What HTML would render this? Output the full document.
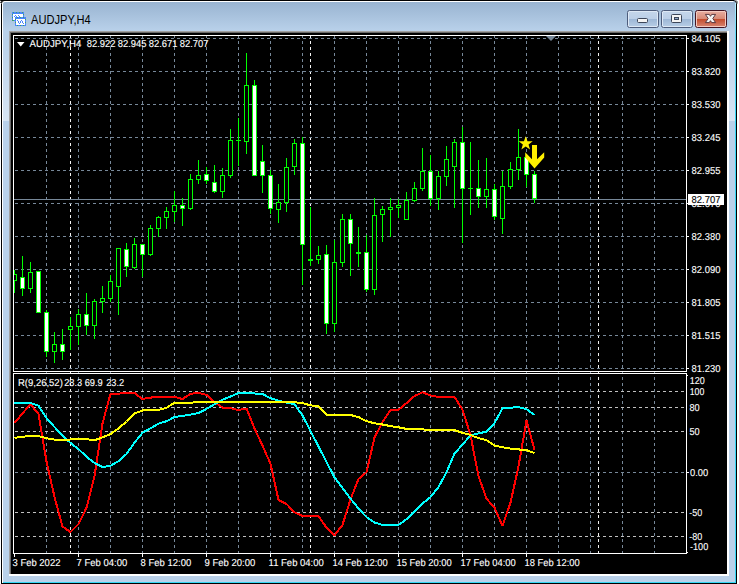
<!DOCTYPE html>
<html lang="en"><head><meta charset="utf-8"><title>AUDJPY,H4</title>
<style>
html,body{margin:0;padding:0;background:#fff;}
body{width:739px;height:584px;overflow:hidden;position:relative;}
svg{position:absolute;left:0;top:0;display:block;}
text{font-family:"Liberation Sans",sans-serif;}
.ax{font-size:10px;text-rendering:geometricPrecision;fill:#fff;stroke:#fff;stroke-width:0.12px;}
.ttl{font-size:12.5px;fill:#000;}
</style></head><body>
<svg width="739" height="584" viewBox="0 0 739 584">
<defs>
<linearGradient id="cap" x1="0" y1="0" x2="0" y2="1"><stop offset="0" stop-color="#99b4d1"/><stop offset="1" stop-color="#b9d1ea"/></linearGradient>
<linearGradient id="btnT" x1="0" y1="0" x2="0" y2="1"><stop offset="0" stop-color="#c3d5ea"/><stop offset="1" stop-color="#bbcfe7"/></linearGradient>
<linearGradient id="btnB" x1="0" y1="0" x2="0" y2="1"><stop offset="0" stop-color="#9db7d6"/><stop offset="1" stop-color="#b4cbe4"/></linearGradient>
<linearGradient id="clsT" x1="0" y1="0" x2="0" y2="1"><stop offset="0" stop-color="#e5a99b"/><stop offset="1" stop-color="#d78874"/></linearGradient>
<linearGradient id="clsB" x1="0" y1="0" x2="0" y2="1"><stop offset="0" stop-color="#c24a2b"/><stop offset="1" stop-color="#d57f6a"/></linearGradient>
<linearGradient id="cy" gradientUnits="userSpaceOnUse" x1="0" y1="3" x2="0" y2="120"><stop offset="0" stop-color="#b4ecff"/><stop offset="0.25" stop-color="#62ddf9"/><stop offset="1" stop-color="#35d7f5"/></linearGradient>
<linearGradient id="glow" gradientUnits="userSpaceOnUse" x1="0" y1="40" x2="0" y2="121"><stop offset="0" stop-color="#fff" stop-opacity="0"/><stop offset="1" stop-color="#fff" stop-opacity="0.42"/></linearGradient>
</defs>
<g shape-rendering="crispEdges">
<rect x="0" y="0" width="739" height="584" fill="#ffffff"/>
<path d="M1.5 584 V3.5 Q1.5 0.5 4.5 0.5 H733.5 Q736.5 0.5 736.5 3.5 V584" fill="#b9d1ea" stroke="#000" stroke-width="1" shape-rendering="geometricPrecision"/>
<rect x="1" y="583" width="736" height="1" fill="#000"/>
<rect x="0" y="0" width="734" height="1" fill="#000"/>
<rect x="1" y="1" width="1" height="1" fill="#3a3a3a"/>
<rect x="2" y="1" width="1" height="1" fill="#444"/>
<rect x="3" y="1" width="1" height="1" fill="#777"/>
<rect x="0" y="2" width="1" height="1" fill="#555"/>
<rect x="1" y="2" width="1" height="1" fill="#222"/>
<rect x="2" y="2" width="1" height="1" fill="#777"/>
<rect x="0" y="1" width="1" height="1" fill="#ddd"/>
<rect x="1" y="3" width="1" height="1" fill="#666"/>
<rect x="0" y="0" width="1" height="1" fill="#333"/>
<rect x="735" y="0" width="1" height="1" fill="#999"/>
<rect x="736" y="0" width="1" height="1" fill="#bbb"/>
<rect x="737" y="1" width="1" height="1" fill="#aaa"/>
<rect x="737" y="2" width="1" height="1" fill="#999"/>
<rect x="737" y="3" width="1" height="1" fill="#bbb"/>
<rect x="736" y="1" width="1" height="1" fill="#777"/>
<rect x="3" y="2" width="732" height="29" fill="url(#cap)"/>
<path d="M2.5 582 V4 Q2.5 1.5 5 1.5 H733" fill="none" stroke="#fff" stroke-width="1" shape-rendering="geometricPrecision"/>
<rect x="3" y="40" width="6" height="81" fill="url(#glow)"/>
<rect x="729" y="40" width="6" height="81" fill="url(#glow)"/>
<rect x="735" y="3" width="1" height="580" fill="url(#cy)"/>
<rect x="3" y="582" width="733" height="1" fill="#35d7f5"/>
<rect x="2" y="582" width="1" height="1" fill="#fff"/>
<rect x="9" y="31" width="720" height="545" fill="#a0a0a0"/>
<rect x="10" y="32" width="719" height="544" fill="#696969"/>
<rect x="11" y="33" width="718" height="543" fill="#ffffff"/>
<rect x="9" y="574" width="2" height="2" fill="#ffffff"/>
<rect x="727" y="31" width="2" height="2" fill="#ffffff"/>
<path d="M9 576 L11 574 L11 576 Z" fill="#fff"/>
<rect x="11" y="33" width="716" height="541" fill="#000000"/>
</g>
<g shape-rendering="crispEdges">
<rect x="12" y="12" width="12" height="9" fill="#4a86ff"/>
<rect x="13" y="14" width="10" height="6" fill="#ffffff"/>
<rect x="15" y="17" width="11" height="9" fill="#4a86ff"/>
<rect x="16" y="19" width="9" height="6" fill="#ffffff"/>
<rect x="14" y="16" width="1" height="1" fill="#4a86ff"/>
<rect x="15" y="15" width="1" height="1" fill="#4a86ff"/>
<rect x="16" y="16" width="1" height="1" fill="#4a86ff"/>
<rect x="18" y="15" width="1" height="1" fill="#4a86ff"/>
<rect x="19" y="16" width="1" height="1" fill="#4a86ff"/>
<rect x="20" y="17" width="1" height="1" fill="#4a86ff"/>
<rect x="17" y="20" width="1" height="1" fill="#4a86ff"/>
<rect x="18" y="21" width="1" height="1" fill="#4a86ff"/>
<rect x="18" y="22" width="1" height="1" fill="#4a86ff"/>
<rect x="19" y="23" width="1" height="1" fill="#4a86ff"/>
<rect x="20" y="22" width="1" height="1" fill="#4a86ff"/>
<rect x="20" y="21" width="1" height="1" fill="#4a86ff"/>
<rect x="21" y="20" width="1" height="1" fill="#4a86ff"/>
<rect x="22" y="21" width="1" height="1" fill="#4a86ff"/>
<rect x="22" y="22" width="1" height="1" fill="#4a86ff"/>
<rect x="23" y="23" width="1" height="1" fill="#4a86ff"/>
<rect x="13" y="12" width="1" height="1" fill="#3c9f6c"/>
<rect x="16" y="12" width="1" height="1" fill="#3c9f6c"/>
<rect x="19" y="12" width="1" height="1" fill="#3c9f6c"/>
<rect x="22" y="12" width="1" height="1" fill="#3c9f6c"/>
<rect x="12" y="14" width="1" height="1" fill="#3c9f6c"/>
<rect x="12" y="17" width="1" height="1" fill="#3c9f6c"/>
<rect x="12" y="20" width="1" height="1" fill="#3c9f6c"/>
<rect x="23" y="14" width="1" height="1" fill="#3c9f6c"/>
<rect x="13" y="20" width="1" height="1" fill="#3c9f6c"/>
<rect x="17" y="17" width="1" height="1" fill="#3c9f6c"/>
<rect x="17" y="25" width="1" height="1" fill="#3c9f6c"/>
<rect x="20" y="17" width="1" height="1" fill="#3c9f6c"/>
<rect x="20" y="25" width="1" height="1" fill="#3c9f6c"/>
<rect x="23" y="17" width="1" height="1" fill="#3c9f6c"/>
<rect x="23" y="25" width="1" height="1" fill="#3c9f6c"/>
<rect x="15" y="19" width="1" height="1" fill="#3c9f6c"/>
<rect x="25" y="19" width="1" height="1" fill="#3c9f6c"/>
<rect x="15" y="22" width="1" height="1" fill="#3c9f6c"/>
<rect x="25" y="22" width="1" height="1" fill="#3c9f6c"/>
</g>
<text class="ttl" transform="translate(31.1 23.6) scale(0.888 1)">AUDJPY,H4</text>
<rect x="627.5" y="10.5" width="31" height="17" rx="2" ry="2" fill="#dde8f5" stroke="#4d5d7c" stroke-width="1"/>
<rect x="629" y="12" width="28" height="7" fill="url(#btnT)" shape-rendering="crispEdges"/>
<rect x="629" y="19" width="28" height="7" fill="url(#btnB)" shape-rendering="crispEdges"/>
<rect x="661.5" y="10.5" width="31" height="17" rx="2" ry="2" fill="#dde8f5" stroke="#4d5d7c" stroke-width="1"/>
<rect x="663" y="12" width="28" height="7" fill="url(#btnT)" shape-rendering="crispEdges"/>
<rect x="663" y="19" width="28" height="7" fill="url(#btnB)" shape-rendering="crispEdges"/>
<rect x="695.5" y="10.5" width="31" height="17" rx="2" ry="2" fill="#f3c9bf" stroke="#431422" stroke-width="1"/>
<rect x="697" y="12" width="28" height="7" fill="url(#clsT)" shape-rendering="crispEdges"/>
<rect x="697" y="19" width="28" height="7" fill="url(#clsB)" shape-rendering="crispEdges"/>
<rect x="637.5" y="18.5" width="10" height="4" rx="1" fill="#f4f4f4" stroke="#3c4659" stroke-width="1"/>
<rect x="671.5" y="14.5" width="10" height="8" rx="1" fill="#f4f4f4" stroke="#3c4659" stroke-width="1"/>
<rect x="674.5" y="17.5" width="4" height="2" fill="#8ea6c6" stroke="#3c4659" stroke-width="1"/>
<path d="M705.4 14.4 H709.3 L710.5 16.3 L711.7 14.4 H715.6 L712.8 18.5 L715.6 22.6 H711.7 L710.5 20.7 L709.3 22.6 H705.4 L708.2 18.5 Z" fill="#f4f4f4" stroke="#5a3a40" stroke-width="1" stroke-linejoin="round"/>
<g shape-rendering="crispEdges">
<line x1="46.5" y1="36" x2="46.5" y2="553" stroke="#778899" stroke-width="1" stroke-dasharray="3 3" stroke-dashoffset="1"/>
<line x1="78.5" y1="36" x2="78.5" y2="553" stroke="#778899" stroke-width="1" stroke-dasharray="3 3" stroke-dashoffset="1"/>
<line x1="110.5" y1="36" x2="110.5" y2="553" stroke="#778899" stroke-width="1" stroke-dasharray="3 3" stroke-dashoffset="1"/>
<line x1="142.5" y1="36" x2="142.5" y2="553" stroke="#778899" stroke-width="1" stroke-dasharray="3 3" stroke-dashoffset="1"/>
<line x1="174.5" y1="36" x2="174.5" y2="553" stroke="#778899" stroke-width="1" stroke-dasharray="3 3" stroke-dashoffset="1"/>
<line x1="206.5" y1="36" x2="206.5" y2="553" stroke="#778899" stroke-width="1" stroke-dasharray="3 3" stroke-dashoffset="1"/>
<line x1="238.5" y1="36" x2="238.5" y2="553" stroke="#778899" stroke-width="1" stroke-dasharray="3 3" stroke-dashoffset="1"/>
<line x1="270.5" y1="36" x2="270.5" y2="553" stroke="#778899" stroke-width="1" stroke-dasharray="3 3" stroke-dashoffset="1"/>
<line x1="302.5" y1="36" x2="302.5" y2="553" stroke="#778899" stroke-width="1" stroke-dasharray="3 3" stroke-dashoffset="1"/>
<line x1="334.5" y1="36" x2="334.5" y2="553" stroke="#778899" stroke-width="1" stroke-dasharray="3 3" stroke-dashoffset="1"/>
<line x1="366.5" y1="36" x2="366.5" y2="553" stroke="#778899" stroke-width="1" stroke-dasharray="3 3" stroke-dashoffset="1"/>
<line x1="398.5" y1="36" x2="398.5" y2="553" stroke="#778899" stroke-width="1" stroke-dasharray="3 3" stroke-dashoffset="1"/>
<line x1="430.5" y1="36" x2="430.5" y2="553" stroke="#778899" stroke-width="1" stroke-dasharray="3 3" stroke-dashoffset="1"/>
<line x1="462.5" y1="36" x2="462.5" y2="553" stroke="#778899" stroke-width="1" stroke-dasharray="3 3" stroke-dashoffset="1"/>
<line x1="494.5" y1="36" x2="494.5" y2="553" stroke="#778899" stroke-width="1" stroke-dasharray="3 3" stroke-dashoffset="1"/>
<line x1="526.5" y1="36" x2="526.5" y2="553" stroke="#778899" stroke-width="1" stroke-dasharray="3 3" stroke-dashoffset="1"/>
<line x1="558.5" y1="36" x2="558.5" y2="553" stroke="#778899" stroke-width="1" stroke-dasharray="3 3" stroke-dashoffset="1"/>
<line x1="590.5" y1="36" x2="590.5" y2="553" stroke="#778899" stroke-width="1" stroke-dasharray="3 3" stroke-dashoffset="1"/>
<line x1="622.5" y1="36" x2="622.5" y2="553" stroke="#778899" stroke-width="1" stroke-dasharray="3 3" stroke-dashoffset="1"/>
<line x1="654.5" y1="36" x2="654.5" y2="553" stroke="#778899" stroke-width="1" stroke-dasharray="3 3" stroke-dashoffset="1"/>
<line x1="70.5" y1="36" x2="70.5" y2="553" stroke="#f4f4f4" stroke-width="1" stroke-dasharray="3 3" stroke-dashoffset="1"/>
<line x1="310.5" y1="36" x2="310.5" y2="553" stroke="#f4f4f4" stroke-width="1" stroke-dasharray="3 3" stroke-dashoffset="1"/>
<line x1="598.5" y1="36" x2="598.5" y2="553" stroke="#f4f4f4" stroke-width="1" stroke-dasharray="3 3" stroke-dashoffset="1"/>
<line x1="14" y1="38.5" x2="686" y2="38.5" stroke="#778899" stroke-width="1" stroke-dasharray="3 3" stroke-dashoffset="5"/>
<line x1="14" y1="71.5" x2="686" y2="71.5" stroke="#778899" stroke-width="1" stroke-dasharray="3 3" stroke-dashoffset="5"/>
<line x1="14" y1="104.5" x2="686" y2="104.5" stroke="#778899" stroke-width="1" stroke-dasharray="3 3" stroke-dashoffset="5"/>
<line x1="14" y1="137.5" x2="686" y2="137.5" stroke="#778899" stroke-width="1" stroke-dasharray="3 3" stroke-dashoffset="5"/>
<line x1="14" y1="170.5" x2="686" y2="170.5" stroke="#778899" stroke-width="1" stroke-dasharray="3 3" stroke-dashoffset="5"/>
<line x1="14" y1="203.5" x2="686" y2="203.5" stroke="#778899" stroke-width="1" stroke-dasharray="3 3" stroke-dashoffset="5"/>
<line x1="14" y1="236.5" x2="686" y2="236.5" stroke="#778899" stroke-width="1" stroke-dasharray="3 3" stroke-dashoffset="5"/>
<line x1="14" y1="269.5" x2="686" y2="269.5" stroke="#778899" stroke-width="1" stroke-dasharray="3 3" stroke-dashoffset="5"/>
<line x1="14" y1="302.5" x2="686" y2="302.5" stroke="#778899" stroke-width="1" stroke-dasharray="3 3" stroke-dashoffset="5"/>
<line x1="14" y1="335.5" x2="686" y2="335.5" stroke="#778899" stroke-width="1" stroke-dasharray="3 3" stroke-dashoffset="5"/>
<line x1="14" y1="368.5" x2="686" y2="368.5" stroke="#778899" stroke-width="1" stroke-dasharray="3 3" stroke-dashoffset="5"/>
<line x1="14" y1="391.5" x2="686" y2="391.5" stroke="#c0c0c0" stroke-width="1" stroke-dasharray="3 3" stroke-dashoffset="5"/>
<line x1="14" y1="407.5" x2="686" y2="407.5" stroke="#c0c0c0" stroke-width="1" stroke-dasharray="3 3" stroke-dashoffset="5"/>
<line x1="14" y1="431.5" x2="686" y2="431.5" stroke="#c0c0c0" stroke-width="1" stroke-dasharray="3 3" stroke-dashoffset="5"/>
<line x1="14" y1="512.5" x2="686" y2="512.5" stroke="#c0c0c0" stroke-width="1" stroke-dasharray="3 3" stroke-dashoffset="5"/>
<line x1="14" y1="536.5" x2="686" y2="536.5" stroke="#c0c0c0" stroke-width="1" stroke-dasharray="3 3" stroke-dashoffset="5"/>
<line x1="14" y1="472.5" x2="686" y2="472.5" stroke="#778899" stroke-width="1" stroke-dasharray="3 3" stroke-dashoffset="5"/>
<rect x="14" y="199" width="672" height="1" fill="#778899"/>
<path d="M546 36 H556 L551 41 Z" fill="#778899" shape-rendering="geometricPrecision"/>
<rect x="14" y="270" width="1" height="23" fill="#00ff00"/>
<rect x="12" y="274" width="5" height="7" fill="#00ff00"/>
<rect x="13" y="275" width="3" height="5" fill="#000000"/>
<rect x="22" y="256" width="1" height="40" fill="#00ff00"/>
<rect x="20" y="277" width="5" height="12" fill="#00ff00"/>
<rect x="21" y="278" width="3" height="10" fill="#ffffff"/>
<rect x="30" y="262" width="1" height="31" fill="#00ff00"/>
<rect x="28" y="272" width="5" height="17" fill="#00ff00"/>
<rect x="29" y="273" width="3" height="15" fill="#000000"/>
<rect x="38" y="271" width="1" height="42" fill="#00ff00"/>
<rect x="36" y="271" width="5" height="42" fill="#00ff00"/>
<rect x="37" y="272" width="3" height="40" fill="#ffffff"/>
<rect x="46" y="310" width="1" height="47" fill="#00ff00"/>
<rect x="44" y="312" width="5" height="40" fill="#00ff00"/>
<rect x="45" y="313" width="3" height="38" fill="#ffffff"/>
<rect x="54" y="332" width="1" height="31" fill="#00ff00"/>
<rect x="52" y="344" width="5" height="8" fill="#00ff00"/>
<rect x="53" y="345" width="3" height="6" fill="#000000"/>
<rect x="62" y="329" width="1" height="31" fill="#00ff00"/>
<rect x="60" y="344" width="5" height="8" fill="#00ff00"/>
<rect x="61" y="345" width="3" height="6" fill="#ffffff"/>
<rect x="70" y="317" width="1" height="33" fill="#00ff00"/>
<rect x="68" y="326" width="5" height="4" fill="#00ff00"/>
<rect x="69" y="327" width="3" height="2" fill="#000000"/>
<rect x="78" y="309" width="1" height="36" fill="#00ff00"/>
<rect x="76" y="314" width="5" height="13" fill="#00ff00"/>
<rect x="77" y="315" width="3" height="11" fill="#000000"/>
<rect x="86" y="293" width="1" height="42" fill="#00ff00"/>
<rect x="84" y="314" width="5" height="12" fill="#00ff00"/>
<rect x="85" y="315" width="3" height="10" fill="#ffffff"/>
<rect x="94" y="299" width="1" height="40" fill="#00ff00"/>
<rect x="92" y="301" width="5" height="25" fill="#00ff00"/>
<rect x="93" y="302" width="3" height="23" fill="#000000"/>
<rect x="102" y="286" width="1" height="27" fill="#00ff00"/>
<rect x="100" y="298" width="5" height="4" fill="#00ff00"/>
<rect x="101" y="299" width="3" height="2" fill="#000000"/>
<rect x="110" y="275" width="1" height="27" fill="#00ff00"/>
<rect x="108" y="281" width="5" height="18" fill="#00ff00"/>
<rect x="109" y="282" width="3" height="16" fill="#000000"/>
<rect x="118" y="248" width="1" height="67" fill="#00ff00"/>
<rect x="116" y="248" width="5" height="39" fill="#00ff00"/>
<rect x="117" y="249" width="3" height="37" fill="#000000"/>
<rect x="126" y="243" width="1" height="34" fill="#00ff00"/>
<rect x="124" y="249" width="5" height="18" fill="#00ff00"/>
<rect x="125" y="250" width="3" height="16" fill="#ffffff"/>
<rect x="134" y="238" width="1" height="31" fill="#00ff00"/>
<rect x="132" y="244" width="5" height="24" fill="#00ff00"/>
<rect x="133" y="245" width="3" height="22" fill="#000000"/>
<rect x="142" y="244" width="1" height="33" fill="#00ff00"/>
<rect x="140" y="244" width="5" height="11" fill="#00ff00"/>
<rect x="141" y="245" width="3" height="9" fill="#ffffff"/>
<rect x="150" y="225" width="1" height="31" fill="#00ff00"/>
<rect x="148" y="228" width="5" height="27" fill="#00ff00"/>
<rect x="149" y="229" width="3" height="25" fill="#000000"/>
<rect x="158" y="216" width="1" height="21" fill="#00ff00"/>
<rect x="156" y="217" width="5" height="12" fill="#00ff00"/>
<rect x="157" y="218" width="3" height="10" fill="#000000"/>
<rect x="166" y="207" width="1" height="22" fill="#00ff00"/>
<rect x="164" y="211" width="5" height="7" fill="#00ff00"/>
<rect x="165" y="212" width="3" height="5" fill="#000000"/>
<rect x="174" y="191" width="1" height="31" fill="#00ff00"/>
<rect x="172" y="205" width="5" height="7" fill="#00ff00"/>
<rect x="173" y="206" width="3" height="5" fill="#000000"/>
<rect x="182" y="198" width="1" height="28" fill="#00ff00"/>
<rect x="180" y="205" width="5" height="4" fill="#00ff00"/>
<rect x="181" y="206" width="3" height="2" fill="#ffffff"/>
<rect x="190" y="174" width="1" height="36" fill="#00ff00"/>
<rect x="188" y="179" width="5" height="30" fill="#00ff00"/>
<rect x="189" y="180" width="3" height="28" fill="#000000"/>
<rect x="198" y="160" width="1" height="24" fill="#00ff00"/>
<rect x="196" y="175" width="5" height="5" fill="#00ff00"/>
<rect x="197" y="176" width="3" height="3" fill="#000000"/>
<rect x="206" y="167" width="1" height="17" fill="#00ff00"/>
<rect x="204" y="174" width="5" height="7" fill="#00ff00"/>
<rect x="205" y="175" width="3" height="5" fill="#ffffff"/>
<rect x="214" y="165" width="1" height="28" fill="#00ff00"/>
<rect x="212" y="182" width="5" height="10" fill="#00ff00"/>
<rect x="213" y="183" width="3" height="8" fill="#ffffff"/>
<rect x="222" y="168" width="1" height="30" fill="#00ff00"/>
<rect x="220" y="175" width="5" height="17" fill="#00ff00"/>
<rect x="221" y="176" width="3" height="15" fill="#000000"/>
<rect x="230" y="129" width="1" height="49" fill="#00ff00"/>
<rect x="228" y="140" width="5" height="36" fill="#00ff00"/>
<rect x="229" y="141" width="3" height="34" fill="#000000"/>
<rect x="238" y="118" width="1" height="48" fill="#00ff00"/>
<rect x="236" y="140" width="5" height="1" fill="#00ff00"/>
<rect x="246" y="53" width="1" height="101" fill="#00ff00"/>
<rect x="244" y="85" width="5" height="57" fill="#00ff00"/>
<rect x="245" y="86" width="3" height="55" fill="#000000"/>
<rect x="254" y="80" width="1" height="96" fill="#00ff00"/>
<rect x="252" y="85" width="5" height="91" fill="#00ff00"/>
<rect x="253" y="86" width="3" height="89" fill="#ffffff"/>
<rect x="262" y="145" width="1" height="48" fill="#00ff00"/>
<rect x="260" y="161" width="5" height="15" fill="#00ff00"/>
<rect x="261" y="162" width="3" height="13" fill="#ffffff"/>
<rect x="270" y="170" width="1" height="44" fill="#00ff00"/>
<rect x="268" y="175" width="5" height="34" fill="#00ff00"/>
<rect x="269" y="176" width="3" height="32" fill="#ffffff"/>
<rect x="278" y="184" width="1" height="39" fill="#00ff00"/>
<rect x="276" y="202" width="5" height="8" fill="#00ff00"/>
<rect x="277" y="203" width="3" height="6" fill="#000000"/>
<rect x="286" y="158" width="1" height="54" fill="#00ff00"/>
<rect x="284" y="167" width="5" height="36" fill="#00ff00"/>
<rect x="285" y="168" width="3" height="34" fill="#000000"/>
<rect x="294" y="139" width="1" height="36" fill="#00ff00"/>
<rect x="292" y="143" width="5" height="24" fill="#00ff00"/>
<rect x="293" y="144" width="3" height="22" fill="#000000"/>
<rect x="302" y="137" width="1" height="148" fill="#00ff00"/>
<rect x="300" y="143" width="5" height="102" fill="#00ff00"/>
<rect x="301" y="144" width="3" height="100" fill="#ffffff"/>
<rect x="310" y="207" width="1" height="59" fill="#00ff00"/>
<rect x="308" y="259" width="5" height="2" fill="#00ff00"/>
<rect x="318" y="246" width="1" height="18" fill="#00ff00"/>
<rect x="316" y="255" width="5" height="5" fill="#00ff00"/>
<rect x="317" y="256" width="3" height="3" fill="#000000"/>
<rect x="326" y="245" width="1" height="89" fill="#00ff00"/>
<rect x="324" y="254" width="5" height="70" fill="#00ff00"/>
<rect x="325" y="255" width="3" height="68" fill="#ffffff"/>
<rect x="334" y="240" width="1" height="92" fill="#00ff00"/>
<rect x="332" y="262" width="5" height="62" fill="#00ff00"/>
<rect x="333" y="263" width="3" height="60" fill="#000000"/>
<rect x="342" y="214" width="1" height="53" fill="#00ff00"/>
<rect x="340" y="219" width="5" height="44" fill="#00ff00"/>
<rect x="341" y="220" width="3" height="42" fill="#000000"/>
<rect x="350" y="214" width="1" height="62" fill="#00ff00"/>
<rect x="348" y="219" width="5" height="25" fill="#00ff00"/>
<rect x="349" y="220" width="3" height="23" fill="#ffffff"/>
<rect x="358" y="227" width="1" height="40" fill="#00ff00"/>
<rect x="356" y="252" width="5" height="2" fill="#00ff00"/>
<rect x="366" y="235" width="1" height="57" fill="#00ff00"/>
<rect x="364" y="252" width="5" height="38" fill="#00ff00"/>
<rect x="365" y="253" width="3" height="36" fill="#ffffff"/>
<rect x="374" y="198" width="1" height="97" fill="#00ff00"/>
<rect x="372" y="215" width="5" height="75" fill="#00ff00"/>
<rect x="373" y="216" width="3" height="73" fill="#000000"/>
<rect x="382" y="206" width="1" height="36" fill="#00ff00"/>
<rect x="380" y="209" width="5" height="6" fill="#00ff00"/>
<rect x="381" y="210" width="3" height="4" fill="#000000"/>
<rect x="390" y="198" width="1" height="39" fill="#00ff00"/>
<rect x="388" y="207" width="5" height="3" fill="#00ff00"/>
<rect x="389" y="208" width="3" height="1" fill="#000000"/>
<rect x="398" y="199" width="1" height="19" fill="#00ff00"/>
<rect x="396" y="205" width="5" height="3" fill="#00ff00"/>
<rect x="397" y="206" width="3" height="1" fill="#000000"/>
<rect x="406" y="192" width="1" height="28" fill="#00ff00"/>
<rect x="404" y="200" width="5" height="20" fill="#00ff00"/>
<rect x="405" y="201" width="3" height="18" fill="#000000"/>
<rect x="414" y="182" width="1" height="20" fill="#00ff00"/>
<rect x="412" y="188" width="5" height="13" fill="#00ff00"/>
<rect x="413" y="189" width="3" height="11" fill="#000000"/>
<rect x="422" y="148" width="1" height="43" fill="#00ff00"/>
<rect x="420" y="171" width="5" height="18" fill="#00ff00"/>
<rect x="421" y="172" width="3" height="16" fill="#000000"/>
<rect x="430" y="155" width="1" height="51" fill="#00ff00"/>
<rect x="428" y="171" width="5" height="28" fill="#00ff00"/>
<rect x="429" y="172" width="3" height="26" fill="#ffffff"/>
<rect x="438" y="171" width="1" height="39" fill="#00ff00"/>
<rect x="436" y="176" width="5" height="23" fill="#00ff00"/>
<rect x="437" y="177" width="3" height="21" fill="#000000"/>
<rect x="446" y="146" width="1" height="40" fill="#00ff00"/>
<rect x="444" y="159" width="5" height="18" fill="#00ff00"/>
<rect x="445" y="160" width="3" height="16" fill="#000000"/>
<rect x="454" y="139" width="1" height="69" fill="#00ff00"/>
<rect x="452" y="142" width="5" height="25" fill="#00ff00"/>
<rect x="453" y="143" width="3" height="23" fill="#000000"/>
<rect x="462" y="127" width="1" height="116" fill="#00ff00"/>
<rect x="460" y="142" width="5" height="47" fill="#00ff00"/>
<rect x="461" y="143" width="3" height="45" fill="#ffffff"/>
<rect x="470" y="142" width="1" height="73" fill="#00ff00"/>
<rect x="468" y="188" width="5" height="1" fill="#00ff00"/>
<rect x="478" y="160" width="1" height="48" fill="#00ff00"/>
<rect x="476" y="188" width="5" height="9" fill="#00ff00"/>
<rect x="477" y="189" width="3" height="7" fill="#ffffff"/>
<rect x="486" y="158" width="1" height="50" fill="#00ff00"/>
<rect x="484" y="189" width="5" height="8" fill="#00ff00"/>
<rect x="485" y="190" width="3" height="6" fill="#000000"/>
<rect x="494" y="184" width="1" height="36" fill="#00ff00"/>
<rect x="492" y="189" width="5" height="28" fill="#00ff00"/>
<rect x="493" y="190" width="3" height="26" fill="#ffffff"/>
<rect x="502" y="171" width="1" height="63" fill="#00ff00"/>
<rect x="500" y="186" width="5" height="33" fill="#00ff00"/>
<rect x="501" y="187" width="3" height="31" fill="#000000"/>
<rect x="510" y="162" width="1" height="27" fill="#00ff00"/>
<rect x="508" y="169" width="5" height="18" fill="#00ff00"/>
<rect x="509" y="170" width="3" height="16" fill="#000000"/>
<rect x="518" y="129" width="1" height="51" fill="#00ff00"/>
<rect x="516" y="157" width="5" height="13" fill="#00ff00"/>
<rect x="517" y="158" width="3" height="11" fill="#000000"/>
<rect x="526" y="155" width="1" height="32" fill="#00ff00"/>
<rect x="524" y="157" width="5" height="18" fill="#00ff00"/>
<rect x="525" y="158" width="3" height="16" fill="#ffffff"/>
<rect x="534" y="171" width="1" height="32" fill="#00ff00"/>
<rect x="532" y="174" width="5" height="25" fill="#00ff00"/>
<rect x="533" y="175" width="3" height="23" fill="#ffffff"/>
<rect x="11" y="36" width="2" height="335" fill="#000"/>
<rect x="13" y="35" width="674" height="1" fill="#fff"/>
<rect x="13" y="371" width="674" height="1" fill="#fff"/>
<rect x="13" y="35" width="1" height="337" fill="#fff"/>
<rect x="686" y="35" width="1" height="337" fill="#fff"/>
<rect x="13" y="373" width="674" height="1" fill="#fff"/>
<rect x="13" y="553" width="674" height="1" fill="#fff"/>
<rect x="13" y="373" width="1" height="181" fill="#fff"/>
<rect x="686" y="373" width="1" height="181" fill="#fff"/>
<rect x="687" y="38" width="2" height="1" fill="#fff"/>
<rect x="687" y="71" width="2" height="1" fill="#fff"/>
<rect x="687" y="104" width="2" height="1" fill="#fff"/>
<rect x="687" y="137" width="2" height="1" fill="#fff"/>
<rect x="687" y="170" width="2" height="1" fill="#fff"/>
<rect x="687" y="203" width="2" height="1" fill="#fff"/>
<rect x="687" y="236" width="2" height="1" fill="#fff"/>
<rect x="687" y="269" width="2" height="1" fill="#fff"/>
<rect x="687" y="302" width="2" height="1" fill="#fff"/>
<rect x="687" y="335" width="2" height="1" fill="#fff"/>
<rect x="687" y="368" width="2" height="1" fill="#fff"/>
<rect x="687" y="472" width="2" height="1" fill="#fff"/>
<rect x="687" y="375" width="1" height="1" fill="#fff"/>
<rect x="687" y="552" width="1" height="1" fill="#fff"/>
<rect x="14" y="554" width="1" height="3" fill="#fff"/>
<rect x="78" y="554" width="1" height="3" fill="#fff"/>
<rect x="142" y="554" width="1" height="3" fill="#fff"/>
<rect x="206" y="554" width="1" height="3" fill="#fff"/>
<rect x="270" y="554" width="1" height="3" fill="#fff"/>
<rect x="334" y="554" width="1" height="3" fill="#fff"/>
<rect x="398" y="554" width="1" height="3" fill="#fff"/>
<rect x="462" y="554" width="1" height="3" fill="#fff"/>
<rect x="526" y="554" width="1" height="3" fill="#fff"/>
</g>
<g clip-path="none">
<polyline points="14.5,423.1 22.5,413.3 30.5,404.5 38.5,413.8 46.5,461.5 54.5,497.0 62.5,526.6 70.5,532.0 78.5,524.1 86.5,507.7 94.5,476.2 102.5,423.5 110.5,394.0 118.5,393.6 126.5,393.0 134.5,393.0 142.5,399.0 150.5,397.6 158.5,396.9 166.5,396.9 174.5,396.9 182.5,399.0 190.5,393.8 198.5,393.0 206.5,394.9 214.5,402.3 222.5,407.6 230.5,408.2 238.5,410.0 246.5,408.5 254.5,428.5 262.5,445.6 270.5,463.8 278.5,500.0 286.5,504.0 294.5,512.3 302.5,515.9 310.5,515.9 318.5,515.9 326.5,527.7 334.5,535.3 342.5,524.9 350.5,499.5 358.5,478.9 366.5,472.2 374.5,437.6 382.5,422.0 390.5,410.0 398.5,409.7 406.5,403.1 414.5,396.0 422.5,392.4 430.5,395.4 438.5,396.9 446.5,396.9 454.5,396.9 462.5,409.8 470.5,435.1 478.5,476.2 486.5,498.6 494.5,507.7 502.5,525.8 510.5,502.7 518.5,466.4 526.5,420.5 534.5,449.8" fill="none" stroke="#ff0000" stroke-width="2" stroke-linejoin="bevel" shape-rendering="crispEdges"/>
<polyline points="14.5,403.4 22.5,402.9 30.5,402.9 38.5,405.7 46.5,418.0 54.5,427.0 62.5,435.5 70.5,443.0 78.5,449.0 86.5,456.8 94.5,462.9 102.5,467.0 110.5,465.8 118.5,461.2 126.5,454.0 134.5,442.6 142.5,432.7 150.5,428.3 158.5,423.7 166.5,421.2 174.5,417.1 182.5,415.9 190.5,414.6 198.5,413.0 206.5,408.9 214.5,404.3 222.5,399.8 230.5,396.5 238.5,393.0 246.5,393.0 254.5,393.5 262.5,394.0 270.5,398.2 278.5,400.7 286.5,402.6 294.5,404.3 302.5,415.5 310.5,431.0 318.5,446.5 326.5,462.0 334.5,477.4 342.5,488.0 350.5,498.6 358.5,508.5 366.5,517.1 374.5,522.5 382.5,524.9 390.5,524.9 398.5,524.9 406.5,519.2 414.5,511.8 422.5,503.6 430.5,497.0 438.5,487.1 446.5,472.2 454.5,453.6 462.5,444.5 470.5,435.5 478.5,433.3 486.5,431.7 494.5,423.1 502.5,408.3 510.5,407.8 518.5,407.0 526.5,409.2 534.5,414.9" fill="none" stroke="#00ffff" stroke-width="2" stroke-linejoin="bevel" shape-rendering="crispEdges"/>
<polyline points="14.5,437.8 22.5,436.7 30.5,436.0 38.5,436.2 46.5,438.2 54.5,439.6 62.5,440.4 70.5,439.4 78.5,439.0 86.5,439.2 94.5,440.2 102.5,437.4 110.5,434.1 118.5,428.4 126.5,421.5 134.5,413.5 142.5,410.5 150.5,410.2 158.5,410.0 166.5,407.7 174.5,402.8 182.5,402.6 190.5,402.6 198.5,402.3 206.5,402.0 214.5,402.0 222.5,402.0 230.5,402.0 238.5,402.0 246.5,402.0 254.5,402.0 262.5,402.0 270.5,402.0 278.5,402.0 286.5,402.0 294.5,402.3 302.5,403.1 310.5,405.3 318.5,406.4 326.5,414.6 334.5,415.0 342.5,415.0 350.5,415.0 358.5,417.1 366.5,421.2 374.5,423.3 382.5,424.5 390.5,426.1 398.5,427.3 406.5,428.9 414.5,428.9 422.5,429.4 430.5,429.9 438.5,429.9 446.5,429.9 454.5,430.2 462.5,432.8 470.5,435.0 478.5,438.2 486.5,440.2 494.5,445.6 502.5,447.3 510.5,448.6 518.5,449.4 526.5,450.2 534.5,453.0" fill="none" stroke="#ffff00" stroke-width="2" stroke-linejoin="bevel" shape-rendering="crispEdges"/>
</g>
<polygon points="525.70,136.20 527.46,141.17 532.74,141.31 528.55,144.53 530.05,149.59 525.70,146.60 521.35,149.59 522.85,144.53 518.66,141.31 523.94,141.17" fill="#fff000"/>
<path d="M532 145 H537 V159.2 L544.2 152.2 V157.6 L534.5 168.4 L525.2 157.6 V152.2 L532 159.2 Z" fill="#fff000"/>
<path d="M17 42 H24.5 L20.75 46.5 Z" fill="#fff"/>
<text class="ax" x="29.6" y="47" textLength="51.8" lengthAdjust="spacingAndGlyphs">AUDJPY,H4</text>
<text class="ax" x="86.7" y="47" textLength="28.8" lengthAdjust="spacingAndGlyphs">82.922</text>
<text class="ax" x="117.7" y="47" textLength="28.8" lengthAdjust="spacingAndGlyphs">82.945</text>
<text class="ax" x="148.7" y="47" textLength="28.8" lengthAdjust="spacingAndGlyphs">82.671</text>
<text class="ax" x="179.7" y="47" textLength="28.8" lengthAdjust="spacingAndGlyphs">82.707</text>
<text class="ax" x="691.6" y="42" textLength="28.8" lengthAdjust="spacingAndGlyphs">84.105</text>
<text class="ax" x="691.6" y="75" textLength="28.8" lengthAdjust="spacingAndGlyphs">83.820</text>
<text class="ax" x="691.6" y="108" textLength="28.8" lengthAdjust="spacingAndGlyphs">83.530</text>
<text class="ax" x="691.6" y="141" textLength="28.8" lengthAdjust="spacingAndGlyphs">83.245</text>
<text class="ax" x="691.6" y="174" textLength="28.8" lengthAdjust="spacingAndGlyphs">82.955</text>
<text class="ax" x="691.6" y="207" textLength="28.8" lengthAdjust="spacingAndGlyphs">82.670</text>
<text class="ax" x="691.6" y="240" textLength="28.8" lengthAdjust="spacingAndGlyphs">82.380</text>
<text class="ax" x="691.6" y="273" textLength="28.8" lengthAdjust="spacingAndGlyphs">82.090</text>
<text class="ax" x="691.6" y="306" textLength="28.8" lengthAdjust="spacingAndGlyphs">81.805</text>
<text class="ax" x="691.6" y="339" textLength="28.8" lengthAdjust="spacingAndGlyphs">81.515</text>
<text class="ax" x="691.6" y="372" textLength="28.8" lengthAdjust="spacingAndGlyphs">81.230</text>
<rect x="688" y="194" width="36" height="11" fill="#fff" shape-rendering="crispEdges"/>
<text class="ax" x="691.6" y="203" style="fill:#000;stroke:#000" textLength="28.8" lengthAdjust="spacingAndGlyphs">82.707</text>
<text class="ax" x="689.7" y="384" textLength="15" lengthAdjust="spacingAndGlyphs">120</text>
<text class="ax" x="689.7" y="395" textLength="14.6" lengthAdjust="spacingAndGlyphs">100</text>
<text class="ax" x="689.4" y="411" textLength="10.2" lengthAdjust="spacingAndGlyphs">80</text>
<text class="ax" x="689.4" y="435" textLength="10.2" lengthAdjust="spacingAndGlyphs">50</text>
<text class="ax" x="690" y="476" textLength="18.2" lengthAdjust="spacingAndGlyphs">0.00</text>
<text class="ax" x="689.2" y="516" textLength="13" lengthAdjust="spacingAndGlyphs">-50</text>
<text class="ax" x="689.2" y="540" textLength="13" lengthAdjust="spacingAndGlyphs">-80</text>
<text class="ax" x="690" y="550" textLength="18.2" lengthAdjust="spacingAndGlyphs">-100</text>
<text class="ax" x="18" y="386" textLength="44.8" lengthAdjust="spacingAndGlyphs">R(9,26,52)</text>
<text class="ax" x="64.2" y="386" textLength="18" lengthAdjust="spacingAndGlyphs">28.3</text>
<text class="ax" x="84.7" y="386" textLength="18" lengthAdjust="spacingAndGlyphs">69.9</text>
<text class="ax" x="106.2" y="386" textLength="18" lengthAdjust="spacingAndGlyphs">23.2</text>
<text class="ax" x="12.6" y="566" textLength="47.8" lengthAdjust="spacingAndGlyphs">3 Feb 2022</text>
<text class="ax" x="76.6" y="566" textLength="50.6" lengthAdjust="spacingAndGlyphs">7 Feb 04:00</text>
<text class="ax" x="140.6" y="566" textLength="50.6" lengthAdjust="spacingAndGlyphs">8 Feb 12:00</text>
<text class="ax" x="204.6" y="566" textLength="50.6" lengthAdjust="spacingAndGlyphs">9 Feb 20:00</text>
<text class="ax" x="268.6" y="566" textLength="55.2" lengthAdjust="spacingAndGlyphs">11 Feb 04:00</text>
<text class="ax" x="332.6" y="566" textLength="55.2" lengthAdjust="spacingAndGlyphs">14 Feb 12:00</text>
<text class="ax" x="396.6" y="566" textLength="55.2" lengthAdjust="spacingAndGlyphs">15 Feb 20:00</text>
<text class="ax" x="460.6" y="566" textLength="55.2" lengthAdjust="spacingAndGlyphs">17 Feb 04:00</text>
<text class="ax" x="524.6" y="566" textLength="55.2" lengthAdjust="spacingAndGlyphs">18 Feb 12:00</text>
</svg></body></html>
